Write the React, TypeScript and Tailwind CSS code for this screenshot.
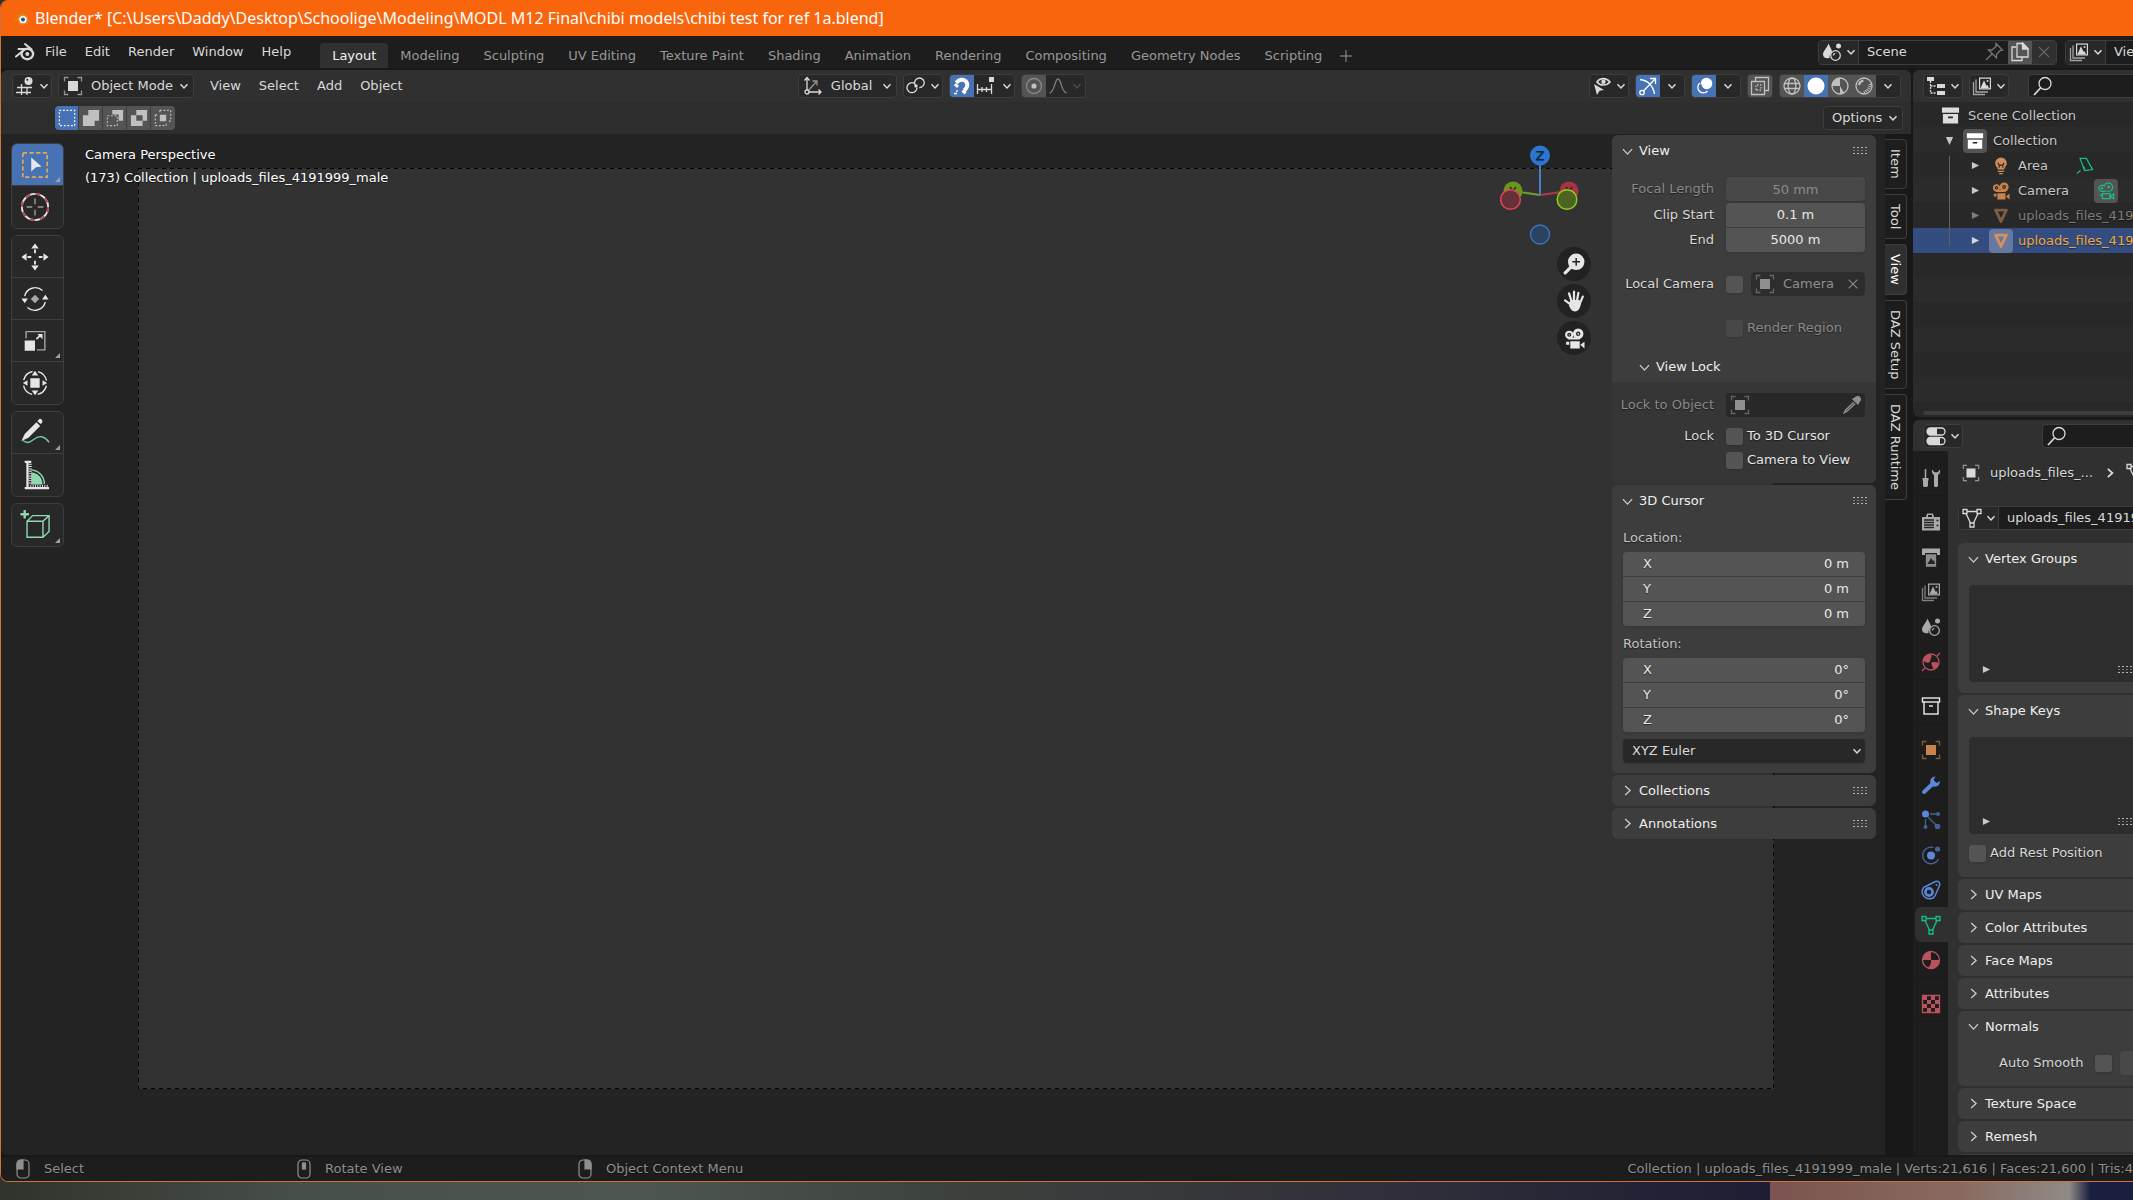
import React, { useState } from 'react';
import clsx from 'clsx';

type IconProps = { className?: string };

const WORKSPACES = [
  'Layout', 'Modeling', 'Sculpting', 'UV Editing', 'Texture Paint', 'Shading',
  'Animation', 'Rendering', 'Compositing', 'Geometry Nodes', 'Scripting',
];

/* ---------- icons ---------- */

const Svg = ({ className = 'w-5 h-5', children }: IconProps & { children: React.ReactNode }) => (
  <svg viewBox="0 0 20 20" fill="none" stroke="currentColor" strokeWidth="1.3" className={clsx('shrink-0', className)} aria-hidden="true">
    {children}
  </svg>
);

const Chevron = ({ className = 'w-[10px] h-[10px]' }: IconProps) => (
  <svg viewBox="0 0 10 10" fill="none" stroke="currentColor" strokeWidth="1.5" className={clsx('shrink-0', className)} aria-hidden="true">
    <path d="M1.5 3.2 5 7l3.5-3.8" />
  </svg>
);

const BlenderLogo = ({ className }: IconProps) => (
  <Svg className={className}>
    <path d="M1 14.5 10.2 7H3.5M10 2l6.5 5.2" strokeWidth="2" strokeLinecap="round" />
    <ellipse cx="12.3" cy="12" rx="5.8" ry="5.2" strokeWidth="2.4" />
    <circle cx="12.3" cy="12" r="2" fill="currentColor" stroke="none" />
  </Svg>
);

const ViewportIcon = () => (
  <Svg>
    <path d="M2 11.5h15M1 16.500h15M6.500 8v11M12 11v8" />
    <circle cx="13.500" cy="5" r="4" fill="currentColor" stroke="none" />
    <circle cx="12.300" cy="3.800" r="1" fill="#282828" stroke="none" />
  </Svg>
);

const ObjectIcon = ({ className }: IconProps) => (
  <Svg className={className}>
    <path d="M1.500 5.500v-4h4M14.500 1.500h4v4M18.500 14.500v4h-4M5.500 18.500h-4v-4" opacity=".6" />
    <path d="M5 5h10v10H5z" fill="currentColor" stroke="none" />
  </Svg>
);

const OrientIcon = () => (
  <Svg>
    <path d="M4 2v14h14M1.500 4.500 4 1.500l2.500 3M15.500 13.500 18 16l-2.500 2.500" />
    <path d="m4 16 10-11M9.500 5H14v4.500" opacity=".6" />
    <circle cx="4" cy="16" r="2" fill="#282828" />
  </Svg>
);

const PivotIcon = () => (
  <Svg>
    <path d="M11 11.800a5 5 0 1 1-2.300-4.300M9.300 9.300a4.800 4.800 0 1 1 4 2.300" />
    <circle cx="10" cy="10" r="1.700" fill="currentColor" stroke="none" />
  </Svg>
);

const MagnetIcon = () => (
  <Svg>
    <path d="M4.300 6.800C7 3.500 11 2.500 13.700 5.200s1.800 6.600-1.500 9.400" strokeWidth="4" />
    <path d="m3 8 3 3M10.500 14.500l3 3" strokeWidth="3" />
    <path d="M2 17.500h3M5 14v2" />
  </Svg>
);

const IncrementIcon = () => (
  <Svg>
    <path d="M1.500 8v10M6 11v5M10.500 11v5M15.500 8v10M1.500 13.500h14" />
    <path d="M13 1h5v5h-5z" fill="currentColor" stroke="none" />
  </Svg>
);

const ProportionalIcon = () => (
  <Svg>
    <circle cx="10" cy="10" r="7.500" opacity=".5" />
    <circle cx="10" cy="10" r="2.600" fill="currentColor" stroke="none" />
  </Svg>
);

const FalloffIcon = () => (
  <Svg><path d="M1.500 17C7 16 6.500 3 10 3s3 13 8.500 14" /></Svg>
);

const VisibilityIcon = () => (
  <Svg>
    <path d="M5 6c3-4.500 9.500-4.500 13 0-3.500 4-10 4-13 0z" strokeWidth="1.700" />
    <circle cx="11.500" cy="5.700" r="2.200" fill="currentColor" stroke="none" />
    <path d="m2 8 10 6-4.500.8L5 19z" fill="currentColor" stroke="none" />
  </Svg>
);

const GizmoIcon = () => (
  <Svg>
    <path d="M2 3.500C9 4 15 9 16.500 18M5 15.500 17 3M12 2.500h5.500V8" />
    <circle cx="4" cy="16.500" r="2.200" />
  </Svg>
);

const OverlayIcon = () => (
  <Svg>
    <circle cx="12.500" cy="7.500" r="5.800" fill="currentColor" stroke="none" />
    <path d="M5.800 7a5.600 5.600 0 1 0 7.800 8" />
    <path d="M7.500 8.500a5.500 5.500 0 0 0 5 5.500" stroke="#4772b3" strokeWidth="1" />
  </Svg>
);

const XrayIcon = () => (
  <Svg>
    <path d="M5.500 5V1.500h13v13H15" />
    <path d="M1.500 5.500h13v13h-13z" />
    <path d="M6 14V9h5v5z" strokeDasharray="1.500 1.500" />
  </Svg>
);

const WireIcon = () => (
  <Svg>
    <circle cx="10" cy="10" r="8" />
    <path d="M2.500 7.500h15M2.500 12.500h15" />
    <ellipse cx="10" cy="10" rx="3.800" ry="8" />
  </Svg>
);

const SolidIcon = () => (
  <Svg><circle cx="10" cy="10" r="8.500" fill="currentColor" stroke="none" /></Svg>
);

const MaterialIcon = ({ className }: IconProps) => (
  <Svg className={className}>
    <circle cx="10" cy="10" r="8" />
    <path d="M10 2a8 8 0 0 0-8 8h8zM10 10v8a8 8 0 0 0 4-1.200L10 10z" fill="currentColor" stroke="none" />
  </Svg>
);

const MaterialTabIcon = ({ className }: IconProps) => (
  <Svg className={className}>
    <circle cx="10" cy="10" r="8.500" />
    <path d="M10 10H1.500A8.500 8.500 0 0 1 10 1.500zM10 10h8.500a8.500 8.500 0 0 1-12 7.800C9 17 10 14 10 10z" fill="currentColor" stroke="none" />
  </Svg>
);

const RenderedIcon = () => (
  <Svg>
    <circle cx="10" cy="10" r="8" />
    <path d="M5 9c.5-2.500 2-4 4.500-4.500" strokeWidth="2.200" />
    <path d="M16 8c0 4-3 7.500-7 8.500" strokeDasharray="1 1" strokeWidth="2.500" />
  </Svg>
);

const SceneIcon = ({ className }: IconProps) => (
  <Svg className={className}>
    <path d="M6.500 1.500c.8 3 3.500 5 3.500 9-2 1-2.500 3-2.500 5.500C4 17 1 15.500 1 12.500 1 9 5 6 6.500 1.500z" fill="currentColor" stroke="none" />
    <circle cx="13.500" cy="13.500" r="4.800" />
    <path d="M11.300 13.500c0-1.200.8-2 2-2.200" />
    <circle cx="16.500" cy="4" r="2.500" fill="currentColor" stroke="none" />
  </Svg>
);

const ImagesIcon = ({ className }: IconProps) => (
  <Svg className={className}>
    <path d="M4 5H3.500M1.500 6v12.500H13M4 3.500V16h12" opacity=".7" />
    <path d="M7 1.500h12v12H7z" fill="currentColor" stroke="none" />
    <path d="M8.200 2.700h9.600v9.600H8.200z" fill="#222" stroke="none" />
    <path d="m8.500 12.300 3.500-8 2.500 5.500 1-.8 1.500 3.300z" fill="currentColor" stroke="none" />
    <circle cx="15.500" cy="5" r="1" fill="currentColor" stroke="none" />
  </Svg>
);

const PinIcon = () => (
  <Svg><path d="m12 1.500 6.500 6.500-2.500.5-3.500 4v3.500L4.500 8H8l4-3.500zM8 12l-6 6" /></Svg>
);

const CopyIcon = () => (
  <Svg>
    <path d="M6 5H2v13.500h10V15" />
    <path d="M7 1.500h6l5 5V15H7z" />
    <path d="M12.500 1v6H18z" fill="currentColor" />
  </Svg>
);

const CloseIcon = ({ className }: IconProps) => (
  <Svg className={className}><path d="m4.500 4.500 11 11M15.500 4.500l-11 11" /></Svg>
);

const OutlinerIcon = () => (
  <Svg>
    <path d="M1 1h7v4H1zM11 8h8v4h-8zM11 15h8v4h-8z" fill="currentColor" stroke="none" />
    <path d="M4.500 5v12H10M4.500 10H10" strokeDasharray="2 1" />
  </Svg>
);

const SearchIcon = () => (
  <Svg>
    <circle cx="12" cy="7.500" r="6" />
    <path d="m7.500 12-6.500 7" strokeWidth="1.800" />
  </Svg>
);

const PropertiesIcon = () => (
  <Svg>
    <rect x="1" y="2" width="18" height="7" rx="3.500" />
    <rect x="1" y="11.500" width="18" height="7" rx="3.500" />
    <path d="M4.500 2H11v7H4.500a3.500 3.500 0 0 1 0-7zM4.500 11.500H14v7H4.500a3.500 3.500 0 0 1 0-7z" fill="currentColor" stroke="none" />
  </Svg>
);

const CollectionIcon = ({ className }: IconProps) => (
  <Svg className={className}>
    <path d="M1 1.500h18V7H1zM2 8.500h16v10H2z" fill="currentColor" stroke="none" />
    <path d="M7.500 12h5" stroke="#222" strokeWidth="1.800" />
  </Svg>
);

const ArchiveIcon = () => (
  <Svg>
    <path d="M1.500 2h17v4h-17zM3 6v12h14V6M8 10h4" strokeWidth="1.500" />
  </Svg>
);

const BulbIcon = ({ className }: IconProps) => (
  <Svg className={className}>
    <path d="M10 .5a6.500 6.500 0 0 0-6.500 6.500c0 3 2.500 4 3 7h7c.5-3 3-4 3-7A6.500 6.500 0 0 0 10 .5z" fill="currentColor" stroke="none" />
    <path d="M8 12V9L6.500 6.500M12 12V9l1.500-2.500M8 9h4" stroke="#2b2b2b" />
    <path d="M6.500 16h7M8 18.500h4" />
  </Svg>
);

const CameraIcon = ({ className }: IconProps) => (
  <Svg className={className}>
    <circle cx="5" cy="6.500" r="4" fill="currentColor" stroke="none" />
    <circle cx="13.500" cy="5.500" r="5" fill="currentColor" stroke="none" />
    <path d="M4 9h11v2H4zM6 12.500h9v7H6zM15.500 16l4-3v6.500zM2 13h3v3H2z" fill="currentColor" stroke="none" />
    <circle cx="5" cy="6.500" r="1.300" stroke="#2b2b2b" />
    <circle cx="13.500" cy="5.500" r="1.500" stroke="#2b2b2b" />
  </Svg>
);

const CameraDataIcon = () => (
  <Svg className="w-[18px] h-[18px]">
    <path d="M5 10.500a3.500 3.500 0 1 1 3-6 4.800 4.800 0 1 1 7 5.500zM6 13h8.500v5.500H6zM14.500 16l4-2.500v5zM6 14.500H3" />
    <circle cx="5.500" cy="7" r=".8" />
    <circle cx="13" cy="5.500" r="1" />
  </Svg>
);

const AreaLightIcon = () => (
  <Svg className="w-[18px] h-[18px]">
    <path d="M4.500 1.500h7l7 12.500-9 1zM1 18.500l4-3.500M8 10l2 3" />
  </Svg>
);

const MeshIcon = ({ className }: IconProps) => (
  <Svg className={className}><path d="M4 3.500h12L10 16z" strokeWidth="3.200" strokeLinejoin="round" /></Svg>
);

const MeshDataIcon = ({ className }: IconProps) => (
  <Svg className={className}>
    <path d="M5 3.500h10M4 5.500l4.500 9.500M16 5.500 11.500 15" />
    <path d="M1 1.500h4v4H1zM15 1.500h4v4h-4zM8 15h4v4H8z" />
  </Svg>
);

const EyedropperIcon = () => (
  <Svg className="w-[18px] h-[18px]">
    <path d="m11 3.500 5.500 5.500 2-3.500a2.500 2.500 0 0 0-4-4z" fill="currentColor" />
    <path d="M12 7 3 15.500l-1.500 3 3-1.500L13.500 8.500" strokeWidth="1.500" />
  </Svg>
);

const ToolTabIcon = () => (
  <Svg>
    <path d="M4.500 1v9" strokeWidth="1.500" />
    <path d="M1.500 10h6v2l-.5 1v4.500c0 2-5 2-5 0V13l-.5-1z" fill="currentColor" stroke="none" />
    <path d="M11 1.500c-.5 3 .5 4.500 2 5.500v10.500c0 2 4 2 4 0V7c1.500-1 2.500-2.500 2-5.500l-2.300 2.800h-3.400z" fill="currentColor" stroke="none" />
  </Svg>
);

const RenderTabIcon = () => (
  <Svg>
    <path d="M1 5h4l1-3.500h6L13 5h6v13.500H1zM7 3v2h4V3z" fill="currentColor" fillRule="evenodd" stroke="none" />
    <path d="M3 8h10M3 10.500h10M3 13h10M3 15.500h10M15.500 8.500h2M15.500 13.500h2" stroke="#222" />
  </Svg>
);

const OutputTabIcon = () => (
  <Svg>
    <path d="M1 1.500h18V8h-3V6H4v2H1z" fill="currentColor" stroke="none" />
    <path d="M5.500 8h9v11h-9z" fill="currentColor" opacity=".8" />
    <path d="m6.500 17 3.500-6 2 3 1-1 1 4z" fill="#222" stroke="none" />
  </Svg>
);

const WorldTabIcon = () => (
  <Svg>
    <circle cx="10" cy="10" r="8" />
    <path d="M3.500 5.500c3-3 6-3.500 6.500-2s-1 2-1 3.500-1 3.500-3 3-2.500-2-3.500-2zM11 11c2-1 4 0 5 0l1 2c-1 2.500-3 3.500-4 3.500-.5-1.500-2-3.500-2-5.500z" fill="currentColor" />
    <path d="m16 4 3-3M1 19l3-3" />
  </Svg>
);

const WrenchIcon = () => (
  <Svg>
    <path d="M3 17 12 8.500" strokeWidth="4" strokeLinecap="round" />
    <path d="M14.500 1.200a5.500 5.500 0 0 0-5 7.300l3 3c3.500 1 6.500-1.500 6.500-5.500l-3.500 2-3-3z" fill="currentColor" stroke="none" />
  </Svg>
);

const ParticlesIcon = () => (
  <Svg>
    <circle cx="4.500" cy="4" r="3.500" fill="currentColor" stroke="none" />
    <g opacity=".65">
      <path d="M9 4h7M4.500 9v7M7 7l8 8" />
      <circle cx="17" cy="4" r="2" fill="currentColor" stroke="none" />
      <circle cx="4.500" cy="17" r="2" fill="currentColor" stroke="none" />
      <circle cx="16.500" cy="16.500" r="2.800" fill="currentColor" stroke="none" />
    </g>
  </Svg>
);

const PhysicsIcon = () => (
  <Svg>
    <circle cx="10" cy="10.500" r="4" fill="currentColor" stroke="none" />
    <path d="M12.500 2.500a8.300 8.300 0 1 0 5 11.500" opacity=".7" />
    <circle cx="16.500" cy="4" r="2.600" fill="currentColor" stroke="none" opacity=".65" />
  </Svg>
);

const ConstraintIcon = () => (
  <Svg>
    <circle cx="8" cy="12" r="3.600" strokeWidth="2.600" />
    <path d="M2.500 7.500 14.500 1.500c3-1 5 1.500 4 4L14 16" strokeWidth="1.500" />
    <path d="M2.500 7.500C-1.500 14 4.500 21 12 18l2-2" strokeWidth="1.500" />
    <circle cx="15.500" cy="5" r="1" fill="currentColor" stroke="none" />
  </Svg>
);

const TextureTabIcon = () => (
  <Svg>
    <path d="M1.500 1.500h17v17h-17z" />
    <path d="M2 2h4v4H2zM10 2h4v4h-4zM6 6h4v4H6zM14 6h4v4h-4zM2 10h4v4H2zM10 10h4v4h-4zM6 14h4v4H6zM14 14h4v4h-4z" fill="currentColor" stroke="none" />
  </Svg>
);

const Grip = () => (
  <svg viewBox="0 0 15 8" className="w-[15px] h-2 shrink-0 text-[#b4b4b4]" fill="currentColor" aria-hidden="true">
    {[0, 4, 8, 12].map(x => [0, 3, 6].map(y => (
      <rect key={`${x}-${y}`} x={x} y={y} width="2" height="1" opacity={y === 3 ? 0.5 : 1} />
    )))}
  </svg>
);

const Triangle = ({ down = false }: { down?: boolean }) => (
  <svg viewBox="0 0 10 10" className="w-[9px] h-[9px] shrink-0" fill="currentColor" aria-hidden="true">
    <path d={down ? 'M1 1h8L5 10z' : 'M1 1v8l8-4z'} />
  </svg>
);

const MouseIcon = ({ button }: { button: 'left' | 'middle' | 'right' }) => (
  <svg viewBox="0 0 14 20" className="w-[14px] h-5 shrink-0" fill="none" stroke="currentColor" strokeWidth="1.200" aria-hidden="true">
    <rect x="1" y="1" width="12" height="18" rx="4" />
    {button === 'left' && <path d="M7 1v9H1V5c0-2 1.500-4 4-4z" fill="currentColor" />}
    {button === 'middle' && <rect x="5.500" y="4" width="3" height="6" fill="currentColor" />}
    {button === 'right' && <path d="M7 1v9h6V5c0-2-1.500-4-4-4z" fill="currentColor" />}
  </svg>
);

/* ---------- small controls ---------- */

const MenuButton = ({ icon, label, className }: { icon: React.ReactNode; label: string; className?: string }) => (
  <button aria-label={label} className={clsx('flex h-6 w-10 shrink-0 items-center justify-center gap-1 rounded border border-[#3d3d3d] bg-[#282828]', className)}>
    {icon}<Chevron />
  </button>
);

const NumberField = ({ label, value, disabled }: { label: string; value: string; disabled?: boolean }) => (
  <input
    aria-label={label}
    defaultValue={value}
    disabled={disabled}
    className={clsx('block h-6 w-full text-center', disabled ? 'rounded bg-[#484848] text-[#8a8a8a] shadow' : 'bg-[#545454] text-[#e8e8e8]')}
  />
);

const Check = ({ id, dim }: { id: string; dim?: boolean }) => (
  <input id={id} type="checkbox" disabled={dim} className={clsx('h-[17px] w-[17px] shrink-0 appearance-none rounded-[3px] shadow checked:bg-[#4772b3]', dim ? 'bg-[#484848]' : 'bg-[#545454]')} />
);

const Row = ({ label, htmlFor, dim, children }: { label?: string; htmlFor?: string; dim?: boolean; children: React.ReactNode }) => (
  <div className="flex h-6 items-center gap-3 pr-[11px]">
    <label htmlFor={htmlFor} className={clsx('w-[102px] shrink-0 text-right', dim && 'text-[#8a8a8a]')}>{label}</label>
    <div className="flex min-w-0 flex-1 items-center">{children}</div>
  </div>
);

const PanelHeader = ({ title, open = false, grip = true, tall = false }: { title: string; open?: boolean; grip?: boolean; tall?: boolean }) => (
  <button className={clsx('flex w-full items-center gap-[5px] pr-2 pl-[9px] text-left text-[#eeeeee]', tall ? 'h-8' : 'h-[31px]')}>
    <Chevron className={clsx('w-[13px] h-[13px] stroke-1 text-[#cccccc]', !open && '-rotate-90')} />
    <span className="flex-1 whitespace-nowrap">{title}</span>
    {grip && <Grip />}
  </button>
);

const AxisFields = ({ name, unit }: { name: string; unit: string }) => (
  <div className="flex flex-col gap-px overflow-hidden rounded shadow">
    {['X', 'Y', 'Z'].map(axis => (
      <label key={axis} className="flex h-6 items-center bg-[#545454] px-5 text-[#e8e8e8]">
        <span className="flex-1">{axis}</span>
        <input aria-label={`${name} ${axis}`} defaultValue={unit} className="-mr-1 w-20 text-right" />
      </label>
    ))}
  </div>
);

/* ---------- top bar ---------- */

const TopBar = ({ workspace, onSelect }: { workspace: string; onSelect: (w: string) => void }) => (
  <div className="flex h-8 shrink-0 items-center overflow-hidden bg-[#1d1d1d] whitespace-nowrap">
    <nav className="flex items-center gap-[18px] pl-[14px]">
      <span className="-mr-2 flex"><BlenderLogo /></span>
      {['File', 'Edit', 'Render', 'Window', 'Help'].map(m => <button key={m}>{m}</button>)}
    </nav>
    <nav className="ml-[29px] flex self-end">
      {WORKSPACES.map(w => (
        <button
          key={w}
          onClick={() => onSelect(w)}
          className={clsx('h-[25px] rounded-t px-3', w === workspace ? 'bg-[#303030] text-[#f0f0f0]' : 'text-[#989898]')}
        >
          {w}
        </button>
      ))}
      <button aria-label="Add workspace" className="ml-[6px] flex items-center text-[#989898]">
        <svg viewBox="0 0 12 12" className="h-3 w-3" stroke="currentColor"><path d="M6 0v12M0 6h12" /></svg>
      </button>
    </nav>
    <div className="flex-1" />
    <div className="flex w-[315px] shrink-0 gap-2 overflow-hidden">
      <div className="flex h-[25px] w-[239px] shrink-0 items-center overflow-hidden rounded border border-[#3d3d3d] bg-[#1d1d1d]">
        <button aria-label="Browse scene" className="flex h-full w-10 items-center justify-center gap-1 border-r border-[#3d3d3d] bg-[#282828]"><SceneIcon /><Chevron /></button>
        <input aria-label="Scene name" defaultValue="Scene" className="min-w-0 flex-1 pl-2" />
        <button aria-label="Pin scene" className="px-1 text-[#777777]"><PinIcon /></button>
        <button aria-label="New scene" className="flex h-full w-6 items-center justify-center bg-[#545454]"><CopyIcon /></button>
        <button aria-label="Remove scene" className="flex h-full w-6 items-center justify-center bg-[#303030] text-[#6d6d6d]"><CloseIcon className="w-[18px] h-[18px]" /></button>
      </div>
      <div className="flex h-[25px] shrink-0 items-center rounded border border-[#3d3d3d] bg-[#1d1d1d]">
        <button aria-label="Browse view layer" className="flex h-full w-10 items-center justify-center gap-1 border-r border-[#3d3d3d] bg-[#282828]"><ImagesIcon /><Chevron /></button>
        <input aria-label="View layer name" defaultValue="ViewLayer" className="w-28 pl-2" />
      </div>
    </div>
  </div>
);

/* ---------- 3D viewport ---------- */

const Toggle = ({ label, on, children }: { label: string; on?: boolean; children: React.ReactNode }) => (
  <button aria-label={label} className={clsx('flex h-full w-6 items-center justify-center', on ? 'bg-[#4772b3] text-white' : 'bg-[#545454] text-[#c0c0c0]')}>
    {children}
  </button>
);

const GROUP = 'flex h-6 shrink-0 items-center overflow-hidden rounded border border-[#3d3d3d] bg-[#282828]';

const ViewportHeader = () => (
  <div className="flex h-8 items-center rounded-tl-md rounded-tr-md bg-[#303030] pr-[10px] pl-[11px] whitespace-nowrap">
    <MenuButton icon={<ViewportIcon />} label="Editor type" />
    <label className={clsx(GROUP, 'ml-[6px] w-[136px] px-1')}>
      <ObjectIcon />
      <select aria-label="Mode" className="min-w-0 flex-1 appearance-none pl-2"><option>Object Mode</option></select>
      <Chevron />
    </label>
    <nav className="ml-4 flex gap-[18px]">
      {['View', 'Select', 'Add', 'Object'].map(m => <button key={m}>{m}</button>)}
    </nav>
    <div className="flex-[11]" />
    <div className="flex gap-[6px]">
      <label className={clsx(GROUP, 'w-[99px] pr-1 pl-1')}>
        <OrientIcon />
        <select aria-label="Transform orientation" className="min-w-0 flex-1 appearance-none pl-2"><option>Global</option></select>
        <Chevron />
      </label>
      <MenuButton icon={<PivotIcon />} label="Pivot point" />
      <div className={GROUP}>
        <Toggle label="Snap" on><MagnetIcon /></Toggle>
        <button aria-label="Snapping" className="flex w-10 items-center justify-center gap-[6px]"><IncrementIcon /><Chevron /></button>
      </div>
      <div className={clsx(GROUP, 'text-[#a8a8a8]')}>
        <Toggle label="Proportional editing"><ProportionalIcon /></Toggle>
        <button aria-label="Falloff" className="flex w-[39px] items-center justify-center gap-1 opacity-70"><FalloffIcon /><Chevron className="h-[10px] w-[10px] opacity-40" /></button>
      </div>
    </div>
    <div className="flex-[14]" />
    <div className="flex gap-[6px]">
      <MenuButton icon={<VisibilityIcon />} label="Object types visibility" />
      <div className={GROUP}>
        <Toggle label="Show gizmo" on><GizmoIcon /></Toggle>
        <button aria-label="Gizmo options" className="flex w-6 justify-center"><Chevron /></button>
      </div>
      <div className={GROUP}>
        <Toggle label="Show overlays" on><OverlayIcon /></Toggle>
        <button aria-label="Overlay options" className="flex w-6 justify-center"><Chevron /></button>
      </div>
      <div className={GROUP}><Toggle label="Toggle X-ray"><XrayIcon /></Toggle></div>
      <div className={GROUP}>
        <Toggle label="Wireframe"><WireIcon /></Toggle>
        <Toggle label="Solid" on><SolidIcon /></Toggle>
        <Toggle label="Material preview"><MaterialIcon /></Toggle>
        <Toggle label="Rendered"><RenderedIcon /></Toggle>
        <button aria-label="Shading options" className="flex w-6 justify-center"><Chevron /></button>
      </div>
    </div>
  </div>
);

const ToolSettings = () => (
  <div className="flex h-8 items-center justify-between bg-[#2d2d2d] pr-2 pl-[54px]">
    <div className="flex h-6 divide-x divide-[#3d3d3d] overflow-hidden rounded">
      <Toggle label="Set selection" on>
        <Svg className="h-[18px] w-[18px]"><path d="M1.500 1.500h17v17h-17z" strokeDasharray="2 2" /></Svg>
      </Toggle>
      <Toggle label="Extend selection">
        <Svg className="h-[18px] w-[18px]"><path d="M7 1h12v12h-5v6H1V7h6z" fill="currentColor" stroke="none" /></Svg>
      </Toggle>
      <Toggle label="Subtract selection">
        <Svg className="h-[18px] w-[18px]"><path d="M7 1h12v12h-5V6H7z" fill="currentColor" stroke="none" /><path d="M1.500 7.500h11v11h-11z" strokeDasharray="2 2" /></Svg>
      </Toggle>
      <Toggle label="Invert selection">
        <Svg className="h-[18px] w-[18px]"><path d="M7 1h12v12h-5v6H1V7h6zM7 7v6h7V7z" fill="currentColor" fillRule="evenodd" stroke="none" /></Svg>
      </Toggle>
      <Toggle label="Intersect selection">
        <Svg className="h-[18px] w-[18px]"><path d="M6.500 1.500h12v12M1.500 6.500v12h12M6.500 1.500v4M1.500 6.500h4M18.500 13.500h-4M13.500 18.500v-4" strokeDasharray="2 2" /><path d="M6.500 6.500h7v7h-7z" fill="currentColor" stroke="none" /></Svg>
      </Toggle>
    </div>
    <button className="flex h-6 w-20 items-center justify-between rounded border border-[#3d3d3d] bg-[#282828] pr-1 pl-2">
      Options <Chevron />
    </button>
  </div>
);

const BigSvg = ({ children }: { children: React.ReactNode }) => (
  <svg viewBox="0 0 32 32" fill="none" stroke="currentColor" strokeWidth="1.500" className="h-[30px] w-[30px]" aria-hidden="true">{children}</svg>
);

const TOOL_GROUPS = [
  [
    { name: 'Select Box', more: true, icon: (
      <BigSvg>
        <path d="M3 3h26v26H3z" stroke="#e8a852" strokeWidth="1.800" strokeDasharray="4.500 2.600" />
        <path d="m12 8 11 9.500-6 .8L12 23z" fill="currentColor" stroke="none" />
      </BigSvg>
    ) },
    { name: 'Cursor', icon: (
      <BigSvg>
        <circle cx="16" cy="16" r="14" strokeWidth="2" />
        <circle cx="16" cy="16" r="14" stroke="#b3454e" strokeWidth="2" strokeDasharray="5.500 5.500" />
        <path d="M16 7v6M16 19v6M7 16h6M19 16h6" stroke="#9a9a9a" />
      </BigSvg>
    ) },
  ],
  [
    { name: 'Move', icon: (
      <BigSvg>
        <path d="m16 1.500 4 5.500h-8zM16 30.500l4-5.500h-8zM1.500 16 7 12v8zM30.500 16 25 12v8z" fill="currentColor" stroke="none" />
        <path d="M16 8v4M16 20v4M8 16h4M20 16h4" strokeWidth="2" />
      </BigSvg>
    ) },
    { name: 'Rotate', icon: (
      <BigSvg>
        <path d="M5 13a11.500 11.500 0 0 1 19-6M27 19a11.500 11.500 0 0 1-19 6" />
        <path d="m1.500 15.500h7L5 20.500zM23.500 16.500h7L27 11.500z" fill="currentColor" stroke="none" />
        <path d="m16 11.500 4.500 4.500-4.500 4.500-4.500-4.500z" fill="#a5a5a5" stroke="none" />
      </BigSvg>
    ) },
    { name: 'Scale', more: true, icon: (
      <BigSvg>
        <path d="M6.500 13V6h20v19.500H18" stroke="#a5a5a5" />
        <path d="M5 15.500h11v11H5z" fill="currentColor" stroke="none" />
        <path d="m17.500 14 4-4" strokeWidth="1.800" />
        <path d="M18.500 8.500H24V14z" fill="currentColor" stroke="none" />
      </BigSvg>
    ) },
    { name: 'Transform', icon: (
      <BigSvg>
        <circle cx="16" cy="16" r="12.500" strokeDasharray="13.600 6" strokeDashoffset="-3" />
        <path d="M11 11h10v10H11z" fill="currentColor" stroke="none" />
        <path d="m16 3 3.500 5h-7zM16 29l3.500-5h-7zM3 16l5-3v6zM29 16l-5-3v6z" fill="currentColor" stroke="none" />
      </BigSvg>
    ) },
  ],
  [
    { name: 'Annotate', more: true, icon: (
      <BigSvg>
        <path d="M3 24c9 7 12-6 20-4 4 1 6 3 8 6" stroke="#74c9a0" />
        <path d="M5 17 17.500 4.500l4 4L9 21l-7.500 3.500z" fill="currentColor" stroke="none" />
        <path d="m18.500 3.500 1.500-2c2-2 5 1.500 3.500 3.500L22 6.500z" fill="currentColor" stroke="none" />
      </BigSvg>
    ) },
    { name: 'Measure', icon: (
      <BigSvg>
        <path d="M12 13a13 13 0 0 1 12 13H12z" fill="#8fd8b0" stroke="none" />
        <path d="M12 10.500a15 15 0 0 1 14 15" stroke="#8fd8b0" />
        <path d="M5 2h7M5 30h26M8 2v28" strokeWidth="2.500" />
        <path d="M11 4v22" strokeDasharray="1 1.500" strokeWidth="3" />
        <path d="M11 28h20" strokeDasharray="1 1.500" strokeWidth="3" />
      </BigSvg>
    ) },
  ],
  [
    { name: 'Add Cube', more: true, icon: (
      <BigSvg>
        <path d="M7.500 12h17v17h-17zM7.500 12l6-6H31v17l-6.500 6M24.500 12 31 6" stroke="#8fd8b0" />
        <path d="M5 0v9M.5 4.500h9" stroke="#8fd8b0" strokeWidth="2.500" />
      </BigSvg>
    ) },
  ],
];

const Toolbar = ({ tool, onSelect }: { tool: string; onSelect: (t: string) => void }) => (
  <div className="ml-[10px] flex w-[53px] flex-col gap-[6px] pt-[9px]">
    {TOOL_GROUPS.map((group, i) => (
      <div key={i} className="divide-y divide-[#3d3d3d] overflow-hidden rounded-md border border-[#3d3d3d] bg-[#282828]">
        {group.map(t => (
          <button
            key={t.name}
            aria-label={t.name}
            onClick={() => onSelect(t.name)}
            className={clsx('relative flex h-[42px] w-full items-center justify-center pr-[6px] text-[#e6e6e6]', tool === t.name && 'bg-[#4772b3]')}
          >
            {t.icon}
            {'more' in t && t.more && (
              <svg viewBox="0 0 5 5" className="absolute right-[3px] bottom-[3px] h-[5px] w-[5px]" aria-hidden="true"><path d="M5 0v5H0z" fill="#a0a0a0" /></svg>
            )}
          </button>
        ))}
      </div>
    ))}
  </div>
);

const NavGizmo = () => (
  <svg viewBox="0 0 80 102" className="h-[102px] w-20" aria-label="View axes">
    <path d="M40 51 13 47" stroke="#6f9b2a" strokeWidth="2" />
    <path d="m40 51 29-4" stroke="#b03a48" strokeWidth="2" />
    <path d="M40 51V12" stroke="#4a7fc4" strokeWidth="2" />
    <circle cx="13" cy="47" r="9.500" fill="#6a961c" />
    <circle cx="69" cy="47" r="9.500" fill="#a83344" />
    <path d="m10 43 3 4 3-4M13 47v4M66 43l6 8M72 43l-6 8" stroke="#2b2b2b" strokeWidth="1.600" fill="none" />
    <circle cx="40" cy="11.500" r="10" fill="#2c76d0" />
    <text x="40" y="16" textAnchor="middle" fontSize="13" fill="#11233d">Z</text>
    <circle cx="10.500" cy="55.500" r="9.800" fill="#663039" stroke="#e0455a" strokeWidth="1.500" />
    <circle cx="67" cy="55.500" r="9.800" fill="#4d6320" stroke="#8fce1e" strokeWidth="1.500" />
    <circle cx="40" cy="90.500" r="9.500" fill="#2c435f" stroke="#3873b8" strokeWidth="1.500" />
  </svg>
);

const ViewNavigation = () => {
  const round = 'flex h-[34px] w-[34px] items-center justify-center rounded-full bg-[#222222] text-[#e6e6e6]';
  return (
    <div className="mr-[21px] flex w-[91px] flex-col items-end gap-[3px] pt-[10px]">
      <div className="-mb-[2px] self-start"><NavGizmo /></div>
      <button aria-label="Zoom" className={round}>
        <Svg className="h-[22px] w-[22px]">
          <circle cx="12" cy="8" r="7.500" fill="currentColor" stroke="none" />
          <path d="M7 13 2 18" strokeWidth="3" strokeLinecap="round" />
          <path d="M12 4.500v7M8.500 8h7" stroke="#222" />
        </Svg>
      </button>
      <button aria-label="Pan" className={round}>
        <Svg className="h-[22px] w-[22px]">
          <path d="m1.800 9.500 5 3.500M5.500 3 8 11M10 1.500V11M14 2.500 12.500 11M18 6l-3 7" strokeWidth="2" strokeLinecap="round" />
          <path d="M5.500 11.500 7 9h8l1.200 3c-.2 4-2.200 7.500-5.200 7.500-3.500 0-4.500-3.500-5.500-5z" fill="currentColor" stroke="none" />
        </Svg>
      </button>
      <button aria-label="Toggle camera view" className={round}><CameraIcon className="h-[21px] w-[21px]" /></button>
    </div>
  );
};

const SidePanel = () => (
  <div className="mr-[9px] flex w-[264px] flex-col gap-[2px] self-start pt-px">
    <section className="overflow-hidden rounded-md bg-[#3d3d3d]">
      <PanelHeader title="View" open tall />
      <div className="flex flex-col pt-[10px]">
        <Row label="Focal Length" dim><NumberField label="Focal Length" value="50 mm" disabled /></Row>
        <div className="mt-[2px] grid grid-cols-[102px_1fr] gap-x-3 pr-[11px] text-right leading-6">
          <div><div>Clip Start</div><div className="pt-px">End</div></div>
          <div className="flex flex-col gap-px overflow-hidden rounded shadow">
            <NumberField label="Clip Start" value="0.1 m" />
            <NumberField label="Clip End" value="5000 m" />
          </div>
        </div>
        <div className="mt-5">
          <Row label="Local Camera" htmlFor="local-camera">
            <Check id="local-camera" />
            <div className="ml-2 flex h-6 min-w-0 flex-1 items-center rounded bg-[#2d2d2d] px-1 text-[#8f8f8f]">
              <ObjectIcon />
              <input aria-label="Camera object" defaultValue="Camera" disabled className="min-w-0 flex-1 pl-2" />
              <CloseIcon className="h-4 w-4" />
            </div>
          </Row>
        </div>
        <div className="mt-5">
          <Row><Check id="render-region" dim /><label htmlFor="render-region" className="ml-1 text-[#8a8a8a]">Render Region</label></Row>
        </div>
      </div>
      <button className="mt-3 flex h-[30px] items-center gap-[5px] pl-[26px] text-[#eeeeee]">
        <Chevron className="h-[13px] w-[13px] stroke-1 text-[#cccccc]" />View Lock
      </button>
      <div className="bg-[#363636] pt-[11px] pb-[11px]">
        <Row label="Lock to Object" dim>
          <div className="flex h-6 min-w-0 flex-1 items-center rounded bg-[#282828] px-1 text-[#8f8f8f]">
            <ObjectIcon />
            <input aria-label="Lock to Object" className="min-w-0 flex-1 pl-2" />
            <EyedropperIcon />
          </div>
        </Row>
        <div className="mt-[7px]">
          <Row label="Lock" htmlFor="to-cursor"><Check id="to-cursor" /><label htmlFor="to-cursor" className="ml-1 text-[#e6e6e6]">To 3D Cursor</label></Row>
          <Row><Check id="camera-to-view" /><label htmlFor="camera-to-view" className="ml-1 text-[#e6e6e6]">Camera to View</label></Row>
        </div>
      </div>
    </section>

    <section className="rounded-md bg-[#3d3d3d] pb-[10px]">
      <PanelHeader title="3D Cursor" open tall />
      <div className="flex flex-col pr-[11px] pl-[11px] pt-[9px]">
        <p className="mb-[2px] leading-6 text-[#c4c4c4]">Location:</p>
        <AxisFields name="Location" unit="0 m" />
        <p className="mt-[6px] mb-[2px] leading-6 text-[#c4c4c4]">Rotation:</p>
        <AxisFields name="Rotation" unit="0°" />
        <label className="mt-[7px] flex h-6 items-center rounded bg-[#282828] pr-[3px] pl-[9px] shadow">
          <select aria-label="Rotation mode" className="flex-1 appearance-none"><option>XYZ Euler</option></select>
          <Chevron />
        </label>
      </div>
    </section>

    <section className="rounded-md bg-[#3d3d3d]"><PanelHeader title="Collections" /></section>
    <section className="rounded-md bg-[#3d3d3d]"><PanelHeader title="Annotations" /></section>
  </div>
);

const SideTabs = ({ tab, onSelect }: { tab: string; onSelect: (t: string) => void }) => (
  <nav className="flex w-[26px] flex-col items-start gap-[5px] bg-[#181818] pt-[5px]">
    {['Item', 'Tool', 'View', 'DAZ Setup', 'DAZ Runtime'].map(t => (
      <button
        key={t}
        onClick={() => onSelect(t)}
        className={clsx(
          'flex w-[22px] items-center justify-center rounded-r border border-l-0 border-[#3d3d3d] pt-[9px] pb-[9px] [writing-mode:vertical-rl]',
          t === tab ? 'bg-[#303030] text-white' : 'bg-[#1d1d1d]',
        )}
      >
        {t}
      </button>
    ))}
  </nav>
);

/* ---------- outliner ---------- */

const Outliner = () => (
  <section className="flex h-[347px] shrink-0 flex-col overflow-hidden rounded-l-md bg-[#282828] whitespace-nowrap">
    <div className="flex h-8 shrink-0 items-center bg-[#303030] pl-[10px]">
      <MenuButton icon={<OutlinerIcon />} label="Editor type" />
      <MenuButton icon={<ImagesIcon />} label="Display mode" className="ml-[6px]" />
      <label className="ml-[19px] flex h-6 flex-1 items-center rounded-l border border-r-0 border-[#3d3d3d] bg-[#1d1d1d] pl-1">
        <SearchIcon /><input aria-label="Filter outliner" className="min-w-0 flex-1" />
      </label>
    </div>
    <ul className="relative flex-1 overflow-hidden bg-[repeating-linear-gradient(#282828_0_25px,#2b2b2b_25px_50px)] pt-px text-[#c8c8c8]">
      <li className="flex h-[25px] items-center gap-2 pl-7"><CollectionIcon className="h-[19px] w-[19px] text-[#dddddd]" />Scene Collection</li>
      <li className="flex h-[25px] items-center pl-8">
        <Triangle down />
        <span className="mr-[6px] ml-[9px] flex h-6 w-6 items-center justify-center rounded bg-[#545454] text-white"><CollectionIcon className="h-[18px] w-[18px]" /></span>
        Collection
      </li>
      <li className="flex h-[25px] items-center pl-[58px]">
        <Triangle /><BulbIcon className="mr-2 ml-3 h-[18px] w-[18px] text-[#d28b52]" />Area
        <span className="ml-7 text-[#12c089]"><AreaLightIcon /></span>
      </li>
      <li className="flex h-[25px] items-center pl-[58px]">
        <Triangle /><CameraIcon className="mr-2 ml-3 h-[18px] w-[18px] text-[#c9834c]" />Camera
        <span className="ml-[25px] flex h-6 w-6 items-center justify-center rounded bg-[#545454] text-[#12c089]"><CameraDataIcon /></span>
      </li>
      <li className="flex h-[25px] items-center pl-[58px] text-[#7d7d7d]">
        <Triangle /><MeshIcon className="mr-2 ml-3 h-[18px] w-[18px] text-[#7d5c42]" />uploads_files_4191999_male
      </li>
      <li className="flex h-[25px] items-center bg-[#334d80] pl-[58px] text-[#f0a93c]">
        <span className="text-[#d5d5d5]"><Triangle /></span>
        <span className="mr-[5px] ml-[9px] flex h-6 w-6 shrink-0 items-center justify-center rounded bg-[#6478a0] text-[#d6905f]"><MeshIcon className="h-[18px] w-[18px]" /></span>
        uploads_files_4191999_male
      </li>
      <span className="absolute top-[54px] left-9 h-[90px] w-px bg-[#606060]" />
    </ul>
    <div className="mb-[2px] ml-[10px] h-1 shrink-0 rounded-l bg-[#3d3d3d]" />
  </section>
);

/* ---------- properties ---------- */

const PROPERTY_TABS = [
  [{ name: 'Tool', color: 'text-[#a9a9a9]', icon: <ToolTabIcon /> }],
  [
    { name: 'Render', color: 'text-[#a9a9a9]', icon: <RenderTabIcon /> },
    { name: 'Output', color: 'text-[#a9a9a9]', icon: <OutputTabIcon /> },
    { name: 'View Layer', color: 'text-[#a9a9a9]', icon: <ImagesIcon /> },
    { name: 'Scene', color: 'text-[#a9a9a9]', icon: <SceneIcon /> },
    { name: 'World', color: 'text-[#b9525c]', icon: <WorldTabIcon /> },
  ],
  [{ name: 'Collection', color: 'text-[#dddddd]', icon: <ArchiveIcon /> }],
  [
    { name: 'Object', color: 'text-[#c9834c]', icon: <ObjectIcon /> },
    { name: 'Modifiers', color: 'text-[#5b87d8]', icon: <WrenchIcon /> },
    { name: 'Particles', color: 'text-[#5b87d8]', icon: <ParticlesIcon /> },
    { name: 'Physics', color: 'text-[#5b87d8]', icon: <PhysicsIcon /> },
    { name: 'Constraints', color: 'text-[#5b87d8]', icon: <ConstraintIcon /> },
    { name: 'Data', color: 'text-[#12c089]', icon: <MeshDataIcon /> },
    { name: 'Material', color: 'text-[#b9525c]', icon: <MaterialTabIcon /> },
  ],
  [{ name: 'Texture', color: 'text-[#b9525c]', icon: <TextureTabIcon /> }],
];

const ListBox = () => (
  <div className="mt-[10px] ml-[11px] flex h-[97px] items-end justify-between rounded-l bg-[#2d2d2d] pb-[8px] pl-[13px] text-[#c8c8c8]">
    <Triangle /><Grip />
  </div>
);

const Properties = () => {
  const [tab, setTab] = useState('Data');
  const panel = 'shrink-0 rounded-l-md bg-[#3d3d3d]';

  return (
    <section className="flex min-h-0 flex-1 flex-col overflow-hidden rounded-l-md bg-[#303030] whitespace-nowrap">
      <div className="flex h-[31px] shrink-0 items-center pl-[10px]">
        <MenuButton icon={<PropertiesIcon />} label="Editor type" />
        <label className="ml-[79px] flex h-6 flex-1 items-center rounded-l border border-r-0 border-[#3d3d3d] bg-[#1d1d1d] pl-1">
          <SearchIcon /><input aria-label="Search properties" className="min-w-0 flex-1" />
        </label>
      </div>
      <div className="flex min-h-0 flex-1">
        <nav className="flex w-[35px] shrink-0 flex-col bg-[#1d1d1d] pt-[9px] pl-[2px]">
          {PROPERTY_TABS.map((group, i) => (
            <div key={i} className="mb-2 flex flex-col border-b border-[#191919]">
              {group.map(t => (
                <button
                  key={t.name}
                  aria-label={t.name}
                  onClick={() => setTab(t.name)}
                  className={clsx('flex h-[35px] items-center justify-center rounded-l-md pr-px', t.color, tab === t.name && 'bg-[#303030]')}
                >
                  {t.icon}
                </button>
              ))}
            </div>
          ))}
        </nav>
        <div className="flex min-w-0 flex-1 flex-col overflow-hidden pl-[10px]">
          <div className="mt-[10px] flex h-6 shrink-0 items-center pl-1">
            <ObjectIcon className="h-[18px] w-[18px]" />
            <span className="ml-[10px]">uploads_files_...</span>
            <Chevron className="mr-[10px] ml-[11px] h-3 w-3 -rotate-90" />
            <MeshDataIcon />
          </div>
          <div className="mt-[21px] flex h-6 shrink-0 items-center rounded-l border border-r-0 border-[#3d3d3d] bg-[#1d1d1d]">
            <button aria-label="Browse mesh data" className="flex h-full w-10 shrink-0 items-center justify-center gap-1 border-r border-[#3d3d3d] bg-[#282828]"><MeshDataIcon /><Chevron /></button>
            <input aria-label="Mesh name" defaultValue="uploads_files_4191999_male" className="min-w-0 flex-1 pl-2" />
          </div>
          <div className="mt-[13px] flex flex-col gap-[2px]">
            <div className={clsx(panel, 'pb-[11px]')}><PanelHeader title="Vertex Groups" open grip={false} tall /><ListBox /></div>
            <div className={clsx(panel, 'pb-3')}>
              <PanelHeader title="Shape Keys" open grip={false} tall />
              <ListBox />
              <div className="mt-[7px] flex h-6 items-center gap-1 pl-[11px]">
                <Check id="rest-position" /><label htmlFor="rest-position">Add Rest Position</label>
              </div>
            </div>
            {['UV Maps', 'Color Attributes', 'Face Maps', 'Attributes'].map(p => (
              <div key={p} className={panel}><PanelHeader title={p} grip={false} /></div>
            ))}
            <div className={clsx(panel, 'pb-[11px]')}>
              <PanelHeader title="Normals" open grip={false} />
              <div className="mt-[9px] flex h-6 items-center pl-[41px]">
                <label htmlFor="auto-smooth" className="mr-3">Auto Smooth</label>
                <Check id="auto-smooth" />
                <span className="ml-2 h-6 flex-1 rounded-l bg-[#484848]" />
              </div>
            </div>
            {['Texture Space', 'Remesh'].map(p => (
              <div key={p} className={panel}><PanelHeader title={p} grip={false} /></div>
            ))}
            <div className={clsx(panel, 'h-[31px]')} />
          </div>
        </div>
      </div>
    </section>
  );
};

/* ---------- app ---------- */

const StatusBar = () => (
  <footer className="flex h-6 shrink-0 items-center overflow-hidden bg-[#1d1d1d] pl-[15px] whitespace-nowrap text-[#8f8f8f]">
    <span className="flex w-[281px] items-center gap-[14px]"><MouseIcon button="left" />Select</span>
    <span className="flex w-[281px] items-center gap-[14px]"><MouseIcon button="middle" />Rotate View</span>
    <span className="flex items-center gap-[14px]"><MouseIcon button="right" />Object Context Menu</span>
    <span className="ml-auto shrink-0">Collection | uploads_files_4191999_male | Verts:21,616 | Faces:21,600 | Tris:4</span>
  </footer>
);

export default function App() {
  const [workspace, setWorkspace] = useState('Layout');
  const [tool, setTool] = useState('Select Box');
  const [sideTab, setSideTab] = useState('View');

  return (
    <div className="flex h-screen flex-col overflow-hidden bg-[linear-gradient(90deg,#30332b_0%,#474f49_14%,#4d564f_30%,#3c413c_45%,#33323b_62%,#1e1d33_83%,#7b5350_83%,#8a6a60_92%,#8f8a86_97%,#1a1f3f_98%)] font-['DejaVu_Sans',sans-serif] text-[13px] text-[#d9d9d9] [text-shadow:0_1px_1px_rgba(0,0,0,0.5)]">
      <div className="flex min-h-0 flex-1 flex-col overflow-hidden rounded-l-lg border-b border-l border-[#d0703a] bg-[#181818]">
        <header className="flex h-9 shrink-0 items-center bg-[#f9650d] pl-3 font-['Noto_Sans',sans-serif] text-[16px] text-white [text-shadow:none]">
          <svg viewBox="0 0 20 20" className="mr-[6px] h-4 w-4" aria-hidden="true">
            <path d="M1 14 10 7H3M10 2l6 5" stroke="#e07b10" strokeWidth="2.500" fill="none" />
            <circle cx="12.500" cy="12" r="6.500" fill="#e98a25" />
            <circle cx="12.500" cy="12" r="4.500" fill="#fff" />
            <circle cx="12.500" cy="12" r="2.600" fill="#1d5b97" />
          </svg>
          {'Blender* [C:\\Users\\Daddy\\Desktop\\Schoolige\\Modeling\\MODL M12 Final\\chibi models\\chibi test for ref 1a.blend]'}
        </header>
        <TopBar workspace={workspace} onSelect={setWorkspace} />
        <main className="flex min-h-0 flex-1 gap-[2px] py-[2px]">
          <section className="flex min-w-0 flex-1 flex-col overflow-hidden rounded-md">
            <ViewportHeader />
            <ToolSettings />
            <div className="relative flex min-h-0 flex-1 bg-[#232323]">
              {/* camera frame, everything outside it is dimmed */}
              <svg className="absolute top-[34px] left-[137px] h-[calc(100%-100px)] w-[calc(100%-274px)] bg-[#323232]" aria-hidden="true">
                <rect width="100%" height="100%" fill="none" stroke="#000" strokeWidth="2" strokeDasharray="4 4" />
              </svg>
              <div className="relative flex min-w-0 flex-1">
                <Toolbar tool={tool} onSelect={setTool} />
                <div className="ml-[21px] flex-1 pt-[9px] leading-[23px] text-white">
                  <p>Camera Perspective</p>
                  <p>(173) Collection | uploads_files_4191999_male</p>
                </div>
                <ViewNavigation />
                <SidePanel />
                <SideTabs tab={sideTab} onSelect={setSideTab} />
              </div>
            </div>
          </section>
          <aside className="flex w-[220px] shrink-0 flex-col gap-[3px]">
            <Outliner />
            <Properties />
          </aside>
        </main>
        <StatusBar />
      </div>
      <div className="h-[18px] shrink-0" />
    </div>
  );
}
